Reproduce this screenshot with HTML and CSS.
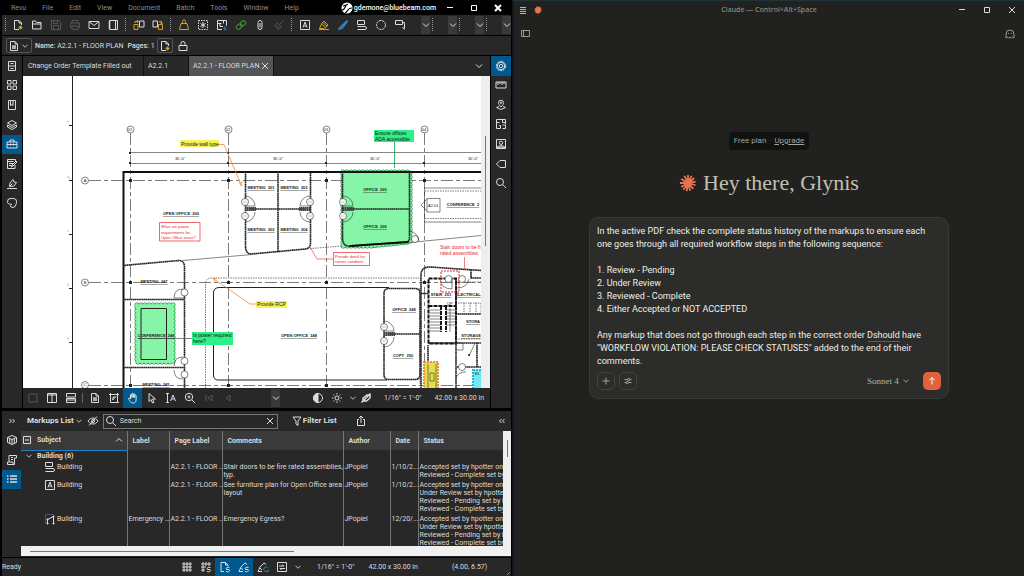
FILE: index.html
```html
<!DOCTYPE html>
<html lang="en">
<head>
    <meta charset="UTF-8">
    <meta name="viewport" content="width=device-width, initial-scale=1.0">
    <title>A2.2.1 - FLOOR PLAN</title>
    <link rel="stylesheet" href="styles.css">
</head>
<body>
    <!-- Icon set, 12 x 12 grid -->
    <svg class="symbols" aria-hidden="true">
        <symbol id="chevron" viewBox="0 0 12 12"><path d="M3 4.5l3 3 3-3"/></symbol>
        <symbol id="chevron-up" viewBox="0 0 12 12"><path d="M3 7.5l3-3 3 3"/></symbol>
        <symbol id="close" viewBox="0 0 12 12"><path d="M3 3l6 6M9 3l-6 6"/></symbol>
        <symbol id="minimize" viewBox="0 0 12 12"><path d="M3 5.5h6"/></symbol>
        <symbol id="maximize" viewBox="0 0 12 12"><path d="M3.5 3.5h5v5h-5z"/></symbol>
        <symbol id="new" viewBox="0 0 12 12"><path d="M7 10.5H2.5v-9H7L9.5 4v2M7 1.5V4h2.5"/><path class="gold" d="M8.5 6.5v4M6.5 8.5h4M7.3 7.3l2.4 2.4M9.7 7.3L7.3 9.7"/></symbol>
        <symbol id="folder" viewBox="0 0 12 12"><path d="M1.5 10V2h3l1 1.5H10V10zM1.5 5H10"/></symbol>
        <symbol id="save" viewBox="0 0 12 12"><path d="M1.5 1.5h7l2 2v7h-9zM3.5 1.5v3h4v-3M3.5 10.5v-4h5v4"/></symbol>
        <symbol id="print" viewBox="0 0 12 12"><path d="M3 4V1.5h6V4M3 8.5H1.5V4h9v4.5H9M3 7h6v3.5H3z"/></symbol>
        <symbol id="mail" viewBox="0 0 12 12"><path d="M1 2.5h10v7H1zM1 2.5l5 4 5-4"/></symbol>
        <symbol id="notebook" viewBox="0 0 12 12"><path d="M2.5 1.5h8v9h-8zM8.5 1.5v9M1.5 3h2M1.5 5h2M1.5 7h2M1.5 9h2"/></symbol>
        <symbol id="undo" viewBox="0 0 12 12"><path d="M6.5 2H11v6H6.500z"/><path class="gold" d="M1 5.5h4v5H1zM2 4V2.5h3M4 1l1.500 1.500L4 4"/></symbol>
        <symbol id="redo" viewBox="0 0 12 12"><path d="M1 2h4.500v6H1z"/><path class="gold" d="M6.500 5.500h4v5h-4zM7 2.500h2.500V5M8 3.500L9.500 5 11 3.500"/></symbol>
        <symbol id="stamp" viewBox="0 0 12 12"><path class="gold" d="M1.500 10.500h9l-1.500-6H3zM4.500 4.500v-2a1.500 1.500 0 0 1 3 0v2"/></symbol>
        <symbol id="snapshot" viewBox="0 0 12 12"><path stroke-dasharray="1.5 1" d="M1.500 1.500h9v9h-9z"/><path d="M6 3v6M3.500 4.500l5 3M8.500 4.500l-5 3"/></symbol>
        <symbol id="compare" viewBox="0 0 12 12"><path d="M6 10.500H1.500v-9h9v5M1.500 4.500h4M4 4.500v3h3M7.500 1.500v3"/><path class="sky" d="M9 7v4M7.500 9.500L9 11l1.500-1.500"/></symbol>
        <symbol id="link" viewBox="0 0 12 12"><g class="green" transform="rotate(-40 6 6)"><rect x="0.5" y="4" width="6" height="4" rx="2"/><rect x="5.5" y="4" width="6" height="4" rx="2"/></g></symbol>
        <symbol id="clip" viewBox="0 0 12 12"><path d="M6 4v4.500M4 4v4.500a2 2 0 0 0 4 0v-5a2 2 0 0 0-4 0"/></symbol>
        <symbol id="brush" viewBox="0 0 12 12"><path d="M10.500 1.500L7 5M4.500 4l3.500 3.500-2 3-4.500-4zM3.500 7.500l1.500-1M5 9l1.500-1.500"/></symbol>
        <symbol id="textbox" viewBox="0 0 12 12"><path d="M1.500 1.500h9v9h-9zM4 8.500l2-5.500 2 5.500M4.700 7h2.600"/></symbol>
        <symbol id="marker" viewBox="0 0 12 12"><path class="gold" d="M6 2l4 4-2 2.500-4.500-3.500zM3.500 5l-2 4.500h4L8 8.500M1 10.500h10M5 3.500L9 7"/></symbol>
        <symbol id="pen" viewBox="0 0 12 12"><path class="sky" stroke-width="1.5" d="M10.500 1.500l-6 5.500-3 3.500 4-1.500 5-7M3 8.500l2 1"/></symbol>
        <symbol id="lines" viewBox="0 0 12 12"><path d="M1.500 1.500h7v4h-7zM1.500 7.500H9a1.500 1.500 0 0 1 0 3H1.500"/></symbol>
        <symbol id="cloud" viewBox="0 0 12 12"><circle cx="6" cy="6" r="4.5" stroke-dasharray="2.5 0.6"/></symbol>
        <symbol id="callout" viewBox="0 0 12 12"><path d="M1.500 1.500h7v4h-7zM8.500 3.500h2v6M8.500 8l2 2.500"/></symbol>
        <symbol id="page" viewBox="0 0 12 12"><path d="M7 10.500H2.500v-9H7L9.500 4v6.500H7M7 1.500V4h2.500M4 6h4M4 8h4M5 5.500V9M7 5.500V9"/></symbol>
        <symbol id="lock" viewBox="0 0 12 12"><path d="M2 5.500h8v5H2zM4 5.500v-2a2 2 0 0 1 4 0v2"/></symbol>
        <symbol id="cabinet" viewBox="0 0 12 12"><path d="M2.500 1.500h7v9h-7zM2.500 6h7M4.500 3.500h3M4.500 8.500h3"/></symbol>
        <symbol id="thumbs" viewBox="0 0 12 12"><path d="M1.500 1.500H5V5H1.500zM7 1.500h3.500V5H7zM1.500 7H5v3.500H1.500zM7 7h3.500v3.500H7z"/></symbol>
        <symbol id="bookmark" viewBox="0 0 12 12"><path d="M2.500 1.500h7v9h-7zM4.500 1.500v5l1.300-1 1.200 1v-5"/></symbol>
        <symbol id="layers" viewBox="0 0 12 12"><path d="M6 1.500L10.500 4 6 6.500 1.500 4zM1.500 6v2L6 10.500 10.500 8V6L6 8.500z"/></symbol>
        <symbol id="toolbox" viewBox="0 0 12 12"><path d="M1 4h10v6H1zM4 4V2h4v2M1 6.500h3M5 6.500h2M8 6.500h3M4.500 5.500v2M7.500 5.500v2"/></symbol>
        <symbol id="props" viewBox="0 0 12 12"><path d="M9 7v3.500H1.500v-9h8V3M1.500 3.500h6M3 5.500h4M3 7.500h3M5.500 9L6 7l4-4 1 1-4 4z"/></symbol>
        <symbol id="sign" viewBox="0 0 12 12"><path d="M1 10.500h10M3.500 8.500L4 5l3-3.500 1 2.500 2.500.5L8 8zM3.500 8.500l3-3"/></symbol>
        <symbol id="shape" viewBox="0 0 12 12"><path d="M2 2.500c2.500-1.500 6-1.500 8 0 1 2.500.5 5-1.500 7.500l-2.500.5-2-1.500c1-.5 1.500-1 1.500-2C4 7.500 2 7 1.500 5.500z"/></symbol>
        <symbol id="gear" viewBox="0 0 12 12"><circle cx="6" cy="6" r="4.7" stroke-dasharray="2.2 0.7"/><circle cx="6" cy="6" r="3.7"/><circle cx="6" cy="6" r="1.7"/></symbol>
        <symbol id="ruler" viewBox="0 0 12 12"><path d="M1 3h10v6H1zM3 3v3M5 3v2M7 3v3M9 3v2"/></symbol>
        <symbol id="place" viewBox="0 0 12 12"><path d="M6 8C4 5.500 3.500 5 3.500 3.700a2.500 2.500 0 0 1 5 0C8.500 5 8 5.500 6 8zM4 7.500l-2.500 1 4.500 2 4.500-2-2.500-1"/><circle cx="6" cy="3.7" r="0.8"/></symbol>
        <symbol id="spaces" viewBox="0 0 12 12"><path d="M1.500 10.500v-9h9V6M1.500 4.500h3M7.500 1.500v3h3M1.500 10.500h4v-3H4M7.500 7h3v3.500h-3"/></symbol>
        <symbol id="person" viewBox="0 0 12 12"><path d="M1.500 1.500h9v9h-9zM2 10c1-3 7-3 8 0zM1.500 9h9"/><circle cx="6" cy="4.8" r="1.7"/></symbol>
        <symbol id="flag" viewBox="0 0 12 12"><path d="M10.500 2.500v7H5L1.500 6 5 2.500z"/></symbol>
        <symbol id="search" viewBox="0 0 12 12"><circle cx="5" cy="5" r="3.5"/><path d="M7.500 7.500L11 11"/></symbol>
        <symbol id="square" viewBox="0 0 12 12"><path d="M2 2h8v8H2z"/></symbol>
        <symbol id="split-v" viewBox="0 0 12 12"><path d="M1.500 1.500h9v9h-9zM6 1.500v9M1.500 3h9"/></symbol>
        <symbol id="split-h" viewBox="0 0 12 12"><path d="M1.500 1.500h9V5h-9zM1.500 6.500h9v4h-9zM1.500 8h9"/></symbol>
        <symbol id="crop" viewBox="0 0 12 12"><path d="M1 2.500h10M9.500 1v10M2.500 1v9.500H11M5 8V5h2.500M4.500 8L8 4.500"/></symbol>
        <symbol id="hand" viewBox="0 0 12 12"><path d="M3.500 7V3a.7.7 0 0 1 1.400 0v2.500V2a.7.7 0 0 1 1.400 0v3.500v-3a.7.7 0 0 1 1.400 0v3V3.700a.7.7 0 0 1 1.400 0V8c0 2-1.200 3-3 3s-2.600-1-3.300-2.200L1.200 6.500c.7-.8 1.400-.6 2.300.5z"/></symbol>
        <symbol id="cursor" viewBox="0 0 12 12"><path d="M3 1.500v8l2-2 1.500 3.500 1.500-.7L6.500 7h3z"/></symbol>
        <symbol id="select-text" viewBox="0 0 12 12"><path d="M1 1.500h3M2.500 1.500v9M1 10.500h3M5.500 9L8 3l2.500 6M6.500 7h3"/></symbol>
        <symbol id="zoom-in" viewBox="0 0 12 12"><circle cx="5" cy="5" r="3.7"/><path d="M7.700 7.700L11 11M5 3.500v3M3.500 5h3"/></symbol>
        <symbol id="first" viewBox="0 0 12 12"><path d="M3 3v6M9 3L5 6l4 3z"/></symbol>
        <symbol id="prev" viewBox="0 0 12 12"><path d="M8 3L4 6l4 3z"/></symbol>
        <symbol id="contrast" viewBox="0 0 12 12"><circle cx="6" cy="6" r="4.5"/><path class="solid" d="M6 1.500a4.500 4.500 0 0 0 0 9z"/></symbol>
        <symbol id="sun" viewBox="0 0 12 12"><circle cx="6" cy="6" r="2"/><path d="M6 1v1.500M6 9.500V11M1 6h1.500M9.500 6H11M2.500 2.500l1 1M8.500 8.500l1 1M9.500 2.500l-1 1M3.500 8.500l-1 1"/></symbol>
        <symbol id="line-off" viewBox="0 0 12 12"><path stroke-width="1.5" d="M1.500 10.500l9-9M3 9V6l4-3h3v3L6.500 9z"/></symbol>
        <symbol id="eye-off" viewBox="0 0 12 12"><path d="M1 6c2.500-4 7.500-4 10 0-2.500 4-7.500 4-10 0zM2 10.500l8-9"/><circle cx="6" cy="6" r="1.5"/></symbol>
        <symbol id="filter" viewBox="0 0 12 12"><path d="M2 2h8L7 6v4.500L5 9V6z"/></symbol>
        <symbol id="share" viewBox="0 0 12 12"><path d="M4 4.500H2.500v6h7v-6H8M6 8V1.500M4 3l2-2 2 2"/></symbol>
        <symbol id="expand" viewBox="0 0 12 12"><path d="M3.500 4l2 2-2 2M6.500 4l2 2-2 2"/></symbol>
        <symbol id="collapse" viewBox="0 0 12 12"><path d="M5.500 4l-2 2 2 2M8.500 4l-2 2 2 2"/></symbol>
        <symbol id="cube" viewBox="0 0 12 12"><path d="M1.500 3.500L6 1.500l4.500 2v5L6 10.500l-4.500-2zM1.500 3.500l4.500 2 4.500-2M6 5.500v5M3.700 5v4M8.300 5v4"/></symbol>
        <symbol id="script" viewBox="0 0 12 12"><path d="M3 8V1.500h7.500V4h-2v6.500h-7V8H7v2.500M5 3.500h2M5 5.500h2"/></symbol>
        <symbol id="list" viewBox="0 0 12 12"><path stroke-width="1.5" d="M1 3h1.500M4 3h7M1 6h1.500M4 6h7M1 9h1.500M4 9h7"/></symbol>
        <symbol id="minus-box" viewBox="0 0 12 12"><path d="M2.500 2.500h7v7h-7zM4 6h4"/></symbol>
        <symbol id="polygon" viewBox="0 0 12 12"><path class="violet" stroke-dasharray="1 1" d="M1.500 10.500v-9h9"/><path d="M3.500 10.500v-4l6-3v7"/><path class="solid" d="M3 6h1v1H3zM9 3h1v1H9zM9 10h1v1H9zM3 10h1v1H3z"/></symbol>
        <symbol id="grid" viewBox="0 0 12 12"><path d="M1 3h10M1 6h10M1 9h10M3 1v10M6 1v10M9 1v10"/></symbol>
        <symbol id="grid-snap" viewBox="0 0 12 12"><path d="M1 3h10M1 6h5M1 9h4M3 1v10M6 1v4M9 1v4M7 10.500c3.500 1 4-1 3-2H7.500c-1-1 0-3 3-2"/></symbol>
        <symbol id="page-snap" viewBox="0 0 12 12"><path d="M5 10.500H2v-9h4.500L9 4v1M6.500 1.500V4H9M7 10.500c3.500 1 4-1 3-2H7.500c-1-1 0-3 3-2"/></symbol>
        <symbol id="mark-snap" viewBox="0 0 12 12"><path d="M1 10.500L3 6l4-4 2 1.500M1 10.500h4M7 10.500c3.500 1 4-1 3-2H7.500c-1-1 0-3 3-2M3 7l2 2"/></symbol>
        <symbol id="reuse" viewBox="0 0 12 12"><path d="M1 10.500L3 6l4-4 2 1.500M1 10.500h4M3 7l2 2"/><path class="sky" d="M10.500 6.500a2.300 2.300 0 1 0 .5 3M9 10.500h2v-2"/></symbol>
        <symbol id="sync" viewBox="0 0 12 12"><path d="M1.500 1.500h9v9h-9zM3 5h5M6.500 3.500L8 5M9 7.500H4M5.500 9L4 7.500"/></symbol>
        <symbol id="menu" viewBox="0 0 12 12"><path d="M3 3.500h6M3 5.500h6M3 7.500h6M3 9.500h6"/></symbol>
        <symbol id="sidebar" viewBox="0 0 12 12"><path d="M1.500 2.500h8v6h-8zM3.500 2.500v6"/></symbol>
        <symbol id="ghost" viewBox="0 0 12 12"><path d="M2 10V6a4 4 0 0 1 8 0v4L8.700 9l-1.400 1L6 9l-1.400 1-1.300-1zM4.500 5v1M7.500 5v1"/></symbol>
        <symbol id="plus" viewBox="0 0 12 12"><path d="M6 2.500v7M2.500 6h7"/></symbol>
        <symbol id="tune" viewBox="0 0 12 12"><path d="M2.500 4.500h3M8 4.500h1.500M2.500 7.500H4M6.500 7.500h3"/><circle cx="6.700" cy="4.500" r="1.200"/><circle cx="5.200" cy="7.500" r="1.200"/></symbol>
        <symbol id="arrow-up" viewBox="0 0 12 12"><path d="M6 9.500v-7M3.200 5.300L6 2.500l2.800 2.800"/></symbol>
        <symbol id="burst" viewBox="0 0 20 20"><path d="M10 10V1M10 10l4-8M10 10l7-5.500M10 10l8.500-1.500M10 10l8.500 2.500M10 10l6 6.500M10 10l2.500 8.500M10 10l-1.500 9M10 10l-5 7.500M10 10l-7.500 4.500M10 10H1M10 10L2.500 5.500M10 10L6 2"/></symbol>
    </svg>

    <div class="desktop">
        <!-- Drawing editor window -->
        <section class="editor">
            <header class="menubar">
                <nav class="menus">
                    <button>Revu</button>
                    <button>File</button>
                    <button>Edit</button>
                    <button>View</button>
                    <button>Document</button>
                    <button>Batch</button>
                    <button>Tools</button>
                    <button>Window</button>
                    <button>Help</button>
                </nav>
                <div class="account">
                    <svg class="logo" viewBox="0 0 12 12"><circle cx="6" cy="6" r="5.5" fill="#fff"/><path d="M1 8c4 0 2-5 6-6M4 11c3-1 2-5 7-5M2 4l3-1" stroke="#000" stroke-width="1.2"/></svg>
                    gdemone@bluebeam.com
                </div>
                <div class="window-buttons">
                    <button aria-label="Minimize"><svg class="icon"><use href="#minimize"/></svg></button>
                    <button aria-label="Maximize"><svg class="icon"><use href="#maximize"/></svg></button>
                    <button aria-label="Close"><svg class="icon strong"><use href="#close"/></svg></button>
                </div>
            </header>

            <div class="toolbar">
                <span class="grip"></span>
                <button aria-label="New"><svg class="icon"><use href="#new"/></svg></button>
                <button aria-label="Open"><svg class="icon"><use href="#folder"/></svg></button>
                <button aria-label="Save" disabled><svg class="icon"><use href="#save"/></svg></button>
                <button aria-label="Print" disabled><svg class="icon"><use href="#print"/></svg></button>
                <button aria-label="Email"><svg class="icon"><use href="#mail"/></svg></button>
                <button aria-label="Studio"><svg class="icon"><use href="#notebook"/></svg></button>
                <span class="grip"></span>
                <button aria-label="Undo"><svg class="icon"><use href="#undo"/></svg></button>
                <button aria-label="Redo"><svg class="icon"><use href="#redo"/></svg></button>
                <span class="grip"></span>
                <button aria-label="Stamp"><svg class="icon"><use href="#stamp"/></svg></button>
                <button aria-label="Snapshot"><svg class="icon"><use href="#snapshot"/></svg></button>
                <button aria-label="Compare"><svg class="icon"><use href="#compare"/></svg></button>
                <button aria-label="Hyperlink"><svg class="icon"><use href="#link"/></svg></button>
                <button aria-label="Attach"><svg class="icon"><use href="#clip"/></svg></button>
                <button aria-label="Format painter" disabled><svg class="icon"><use href="#brush"/></svg></button>
                <span class="grip"></span>
                <button aria-label="Text box"><svg class="icon"><use href="#textbox"/></svg></button>
                <button aria-label="Highlight"><svg class="icon"><use href="#marker"/></svg></button>
                <button aria-label="Pen"><svg class="icon"><use href="#pen"/></svg></button>
                <button aria-label="Dimension"><svg class="icon"><use href="#lines"/></svg></button>
                <button aria-label="Cloud"><svg class="icon"><use href="#cloud"/></svg></button>
                <button aria-label="Callout"><svg class="icon"><use href="#callout"/></svg></button>
                <div class="overflow">
                    <button class="more" aria-label="More markups"><svg class="icon"><use href="#chevron"/></svg></button><span class="grip"></span>
                    <button class="more" aria-label="More shapes"><svg class="icon"><use href="#chevron"/></svg></button><span class="grip"></span>
                    <button class="more" aria-label="More measures"><svg class="icon"><use href="#chevron"/></svg></button><span class="grip"></span>
                    <button class="more" aria-label="More tools"><svg class="icon"><use href="#chevron"/></svg></button>
                </div>
            </div>

            <div class="properties">
                <button class="boxed" aria-label="File properties"><svg class="icon"><use href="#page"/></svg><svg class="icon small"><use href="#chevron"/></svg></button>
                <span class="name"><b>Name:</b> A2.2.1 - FLOOR PLAN</span>
                <span class="pages"><b>Pages:</b> 1</span>
                <button class="boxed" aria-label="Add page"><svg class="icon"><use href="#new"/></svg></button>
                <button aria-label="Security"><svg class="icon"><use href="#lock"/></svg></button>
            </div>

            <div class="workspace">
                <nav class="rail">
                    <button aria-label="File access"><svg class="icon"><use href="#cabinet"/></svg></button>
                    <button aria-label="Thumbnails"><svg class="icon"><use href="#thumbs"/></svg></button>
                    <button aria-label="Bookmarks"><svg class="icon"><use href="#bookmark"/></svg></button>
                    <button aria-label="Layers"><svg class="icon"><use href="#layers"/></svg></button>
                    <button class="active" aria-label="Tool chest"><svg class="icon"><use href="#toolbox"/></svg></button>
                    <button aria-label="Forms"><svg class="icon"><use href="#props"/></svg></button>
                    <button aria-label="Signatures"><svg class="icon"><use href="#sign"/></svg></button>
                    <button aria-label="Studio"><svg class="icon"><use href="#shape"/></svg></button>
                </nav>

                <div class="document">
                    <div class="tabs">
                        <button class="tab wide">Change Order Template Filled out</button>
                        <button class="tab short">A2.2.1</button>
                        <button class="tab current">A2.2.1 - FLOOR PLAN <svg class="icon"><use href="#close"/></svg></button>
                        <button class="tab-list" aria-label="All tabs"><svg class="icon"><use href="#chevron"/></svg></button>
                    </div>

                    <div class="sheet">
                        <svg class="plan" viewBox="23 76 458 312" preserveAspectRatio="xMinYMin slice">
                            <defs>
                                <!-- pair of door tags with their swings -->
                                <g id="door"><path d="M0 -10a10 10 0 0 1 10 10h-10M0 16a10 10 0 0 0 10 -10" class="thin"/><circle cy="-4" cx="0" r="3.5" class="tag"/><circle cy="10" cx="0" r="3.5" class="tag"/><path d="M-2 -4h4M-2 10h4" class="faint"/><path d="M0 3h11" class="wall thick"/></g>
                                <path id="office-cloud" d="M343 172h67v70l-40 4h-27z"/>
                                <path id="conf-cloud" d="M137 305h36v57h-36z"/>
                            </defs>

                            <!-- sheet frame and grid -->
                            <path class="line" d="M72.5 76v312M69 125.5h3M69 180.5h3M69 234.5h3M69 288.5h3M69 342.5h3"/>
                            <path class="faint" d="M67 121l2 1M67 177h2v2M67 230l2 2M68 283v3M68 337v3"/>
                            <path class="thin" d="M130 152.5h351M130 163.5h351"/>
                            <path class="axis" d="M130.5 133v255M228.5 133v255M326.5 133v255M424.5 133v255M89 180.5h392M89 282.5h392M89 385.5h392"/>
                            <path class="node" d="M129 179h3v3h-3zM227 179h3v3h-3zM325 179h3v3h-3zM423 179h3v3h-3zM129 281h3v3h-3zM227 281h3v3h-3zM325 281h3v3h-3zM423 281h3v3h-3zM129 384h3v3h-3zM227 384h3v3h-3zM325 384h3v3h-3zM129 152h2v2h-2zM227 152h2v2h-2zM129 162h2v2h-2zM227 162h2v2h-2zM325 162h2v2h-2zM423 162h2v2h-2z"/>
                            <g class="tag">
                                <circle cx="130.5" cy="129.5" r="3.5"/><circle cx="228.5" cy="129.5" r="3.5"/><circle cx="326.5" cy="129.5" r="3.5"/><circle cx="424.5" cy="129.5" r="3.5"/>
                                <circle cx="85" cy="180.5" r="3.5"/><circle cx="85" cy="282.5" r="3.5"/><circle cx="85" cy="385" r="3.5"/>
                            </g>
                            <g class="tiny">
                                <text x="130" y="131">01</text><text x="228" y="131">02</text><text x="326" y="131">03</text><text x="424" y="131">04</text>
                                <text x="85" y="182">A</text><text x="85" y="284">B</text><text x="85" y="386">C</text>
                                <text x="180" y="160">30'-0"</text><text x="278" y="160">30'-0"</text><text x="375" y="160">30'-0"</text><text x="473" y="160">30'-0"</text>
                            </g>

                            <!-- highlights sit under the walls -->
                            <use href="#office-cloud" class="puff-edge"/><use href="#office-cloud" class="puff"/>
                            <use href="#conf-cloud" class="puff-edge"/><use href="#conf-cloud" class="puff"/>

                            <!-- walls -->
                            <path class="outer" d="M123.5 388V172H481"/>
                            <path class="wall" d="M245.5 172v74q0 8 6 8l54-5q5-1 5-6V172M278 172v80M250 209h56"/>
                            <path class="wall" d="M342.5 172v67q1 8 8 7l55-4q4 0 4-4v-66M348 209h61"/>
                            <path class="wall heavy" d="M350 246l59-4"/>
                            <path class="wall" d="M123 265.5l56-5q5 0 5.5 6V388M123 299.5h61M123 367.5h61"/>
                            <path class="thin" d="M183 260.5l69-6M410 242.5l71-7"/>
                            <path class="dotted" d="M305 249l37-3"/>
                            <path class="dotted" d="M205.5 388V284q0-6 6-6H421"/>
                            <path class="line" d="M219 287.5h170M213.5 293v82q0 5 5 5H387M213.5 293q0-5.5 6-5.5"/>
                            <path class="wall" d="M389 288.5h26q5 0 5 5v81q0 5-5 5h-26q-5 0-5-5v-81q0-5 5-5zM389 334h31"/>
                            <path class="wall" d="M421 388V275q0-8 9-8l51 3.5M421 293.5h7"/>
                            <path class="thin" d="M424.5 222v-34H481M424.5 222H481"/>
                            <path class="line" d="M141 308.5h25.5v51H141z"/>
                            <path class="dotted" d="M425 191h56M425 218.5h56M420 288v96"/>
                            <path class="thin" d="M427 198.5h13V212h-13zM427 199l-6 6 6 6M138 338.5h54"/>
                            <path class="stair" d="M428.5 278.5H456v65h-27.5zM428.5 306H456M441 306v26M446 306v26"/>
                            <path class="thin" d="M430 310h11M430 313h11M430 316h11M430 319h11M430 322h11M430 325h11M430 328h11M430 331h11M446 310h9M446 313h9M446 316h9M446 319h9M446 322h9M446 325h9M450 308v24"/>
                            <path class="wall" d="M456 278v110M428 343h53M456 314h25M428 345v43M471 270v8h10M477 343v24M457 367h24"/>
                            <path class="dotted" d="M458 303h23v11M464 303v11M470 303v11M476 303v11M456 339h25M457 282h24"/>
                            <path class="thin" d="M475 343l-6 13M457 343h6v7h-6M456 378a10 10 0 0 1 10-6"/>

                            <!-- doors -->
                            <use href="#door" x="245" y="206"/><use href="#door" x="343" y="206"/><use href="#door" x="384" y="331"/>
                            <g transform="matrix(-1 0 0 1 310 206)"><use href="#door"/></g>
                            <g class="tag"><circle cx="184.5" cy="292.5" r="3.5"/><circle cx="184.5" cy="361" r="3.5"/><circle cx="184.5" cy="374.5" r="3.5"/><circle cx="448.5" cy="279" r="3.5"/><circle cx="462" cy="279" r="3.5"/><circle cx="462" cy="367" r="3.5"/><circle cx="415" cy="239" r="3.5"/></g>
                            <path class="thin" d="M174 298q0-9 9-9M174 298h10M174 366q0-9 9-9M174 370q0 9 9 9M440 279q1 10 12 10v-10M469 279q-2 9-12 9M410 231q8 2 9 10"/>
                            <circle class="node" cx="469" cy="355" r="1"/>

                            <!-- rooms -->
                            <g class="room">
                                <text x="181" y="215">OPEN OFFICE&#160; 200</text>
                                <text x="261" y="189">MEETING&#160; 201</text><text x="294" y="189">MEETING&#160; 203</text>
                                <text x="261" y="231">MEETING&#160; 202</text><text x="294" y="231">MEETING&#160; 204</text>
                                <text x="375" y="191">OFFICE&#160; 205</text><text x="375" y="228">OFFICE&#160; 206</text>
                                <text x="463" y="206">CONFERENCE&#160; 2</text>
                                <text x="154" y="283">MEETING&#160; 247</text><text x="156" y="337">CONFERENCE&#160; 246</text>
                                <text x="156" y="386">MEETING&#160; 245</text><text x="299" y="337">OPEN OFFICE&#160; 248</text>
                                <text x="404" y="311">OFFICE&#160; 248</text><text x="403" y="357">COPY&#160; 250</text>
                                <text x="441" y="296">STAIR&#160; 251</text><text x="468" y="296">ELECTRICAL</text>
                                <text x="473" y="323">STORA</text><text x="471" y="337">STORAGE</text>
                            </g>
                            <text class="mark" x="428" y="207">A2.01</text>
                            <text class="mark" x="447" y="305">UP</text>

                            <!-- markups -->
                            <path class="note-green" d="M374 130h40v12h-40zM192 332h41v13h-41z"/>
                            <path class="green-line" d="M394.5 142v26"/>
                            <g class="note"><text x="375" y="135">Ensure offices</text><text x="375" y="141">ADA accessible</text><text x="193" y="337">Is power required</text><text x="193" y="343">here?</text></g>
                            <path class="note-yellow" d="M180 140h39v7h-39zM256 301h31v7h-31z"/>
                            <g class="note"><text x="181" y="146">Provide wall type</text><text x="257" y="306">Provide RCP</text></g>
                            <path class="orange-line" d="M219 144.5h5l17 40M239 182l2.500 4 .5-5M256 304h-6l-36-25M217 279l-4-1 2 4"/>
                            <path class="red-box" d="M159.5 222.5H200V241h-40.500zM333.5 252.5h36v13h-36z"/>
                            <path class="red-line" d="M333 259h-16l-7-12M464.5 257v12"/>
                            <g class="red small-note"><text x="161" y="228">What are power</text><text x="161" y="234">requirements for</text><text x="161" y="239">Open Office areas?</text><text x="335" y="258">Provide detail for</text><text x="335" y="263">corner condition</text></g>
                            <g class="red note"><text x="440" y="249">Stair doors to be fi</text><text x="440" y="255">rated assemblies,</text></g>
                            <path class="red-cloud" d="M441 271h18v21h-18z"/>
                            <path class="yellow-cloud" d="M424 362h14v30h-14z"/>
                            <path class="thin" d="M428 364v24M436 364v24M430 373h4v8h-4z"/>
                            <path class="cyan-cloud" d="M473 370h12v20h-12z"/>
                            <text class="mark" x="475" y="375">EL</text>
                        </svg>
                        <div class="scroll-y"><span></span></div>
                    </div>

                    <div class="navbar">
                        <button aria-label="Single" disabled><svg class="icon"><use href="#square"/></svg></button>
                        <button aria-label="Split vertical"><svg class="icon"><use href="#split-v"/></svg></button>
                        <button aria-label="Split horizontal"><svg class="icon"><use href="#split-h"/></svg></button>
                        <span class="divider"></span>
                        <button aria-label="Page setup"><svg class="icon"><use href="#page"/></svg></button>
                        <button aria-label="Crop"><svg class="icon"><use href="#crop"/></svg></button>
                        <button class="active" aria-label="Pan"><svg class="icon"><use href="#hand"/></svg></button>
                        <button aria-label="Select"><svg class="icon"><use href="#cursor"/></svg></button>
                        <button aria-label="Select text"><svg class="icon"><use href="#select-text"/></svg></button>
                        <button aria-label="Zoom"><svg class="icon"><use href="#zoom-in"/></svg></button>
                        <button aria-label="First page" disabled><svg class="icon"><use href="#first"/></svg></button>
                        <button aria-label="Previous page" disabled><svg class="icon"><use href="#prev"/></svg></button>
                        <div class="nav-end">
                            <button class="more" aria-label="More"><svg class="icon"><use href="#chevron"/></svg></button>
                            <button class="dim-first" aria-label="Dimmer"><svg class="icon"><use href="#contrast"/></svg></button>
                            <button aria-label="Brightness"><svg class="icon"><use href="#sun"/></svg></button>
                            <button class="slim" aria-label="Brightness options"><svg class="icon small"><use href="#chevron"/></svg></button>
                            <button class="slim" aria-label="Line weights"><svg class="icon"><use href="#line-off"/></svg></button>
                            <span class="scale">1/16" = 1'-0"</span>
                            <span>42.00 x 30.00 in</span>
                        </div>
                    </div>
                </div>

                <nav class="rail right">
                    <button class="active" aria-label="Properties"><svg class="icon"><use href="#gear"/></svg></button>
                    <button aria-label="Measurements"><svg class="icon"><use href="#ruler"/></svg></button>
                    <button aria-label="Places"><svg class="icon"><use href="#place"/></svg></button>
                    <button aria-label="Spaces"><svg class="icon"><use href="#spaces"/></svg></button>
                    <button aria-label="Models"><svg class="icon"><use href="#person"/></svg></button>
                    <button aria-label="Flags"><svg class="icon"><use href="#flag"/></svg></button>
                    <button aria-label="Search panel"><svg class="icon"><use href="#search"/></svg></button>
                </nav>
            </div>

            <div class="markups">
                <nav class="rail">
                    <button aria-label="Expand"><svg class="icon"><use href="#expand"/></svg></button>
                    <button aria-label="3D model"><svg class="icon"><use href="#cube"/></svg></button>
                    <button aria-label="Scripts"><svg class="icon"><use href="#script"/></svg></button>
                    <button class="active" aria-label="Markups list"><svg class="icon"><use href="#list"/></svg></button>
                </nav>
                <div class="panel">
                    <div class="panel-bar">
                        <button class="title">Markups List <svg class="icon small"><use href="#chevron"/></svg></button>
                        <button class="hide" aria-label="Hide markups"><svg class="icon"><use href="#eye-off"/></svg></button>
                        <label class="search"><svg class="icon"><use href="#search"/></svg><input type="text" placeholder="Search" aria-label="Search markups"><svg class="icon"><use href="#close"/></svg></label>
                        <button class="title filter"><svg class="icon"><use href="#filter"/></svg>Filter List</button>
                        <button class="export" aria-label="Export"><svg class="icon"><use href="#share"/></svg></button>
                        <button class="collapse" aria-label="Collapse"><svg class="icon"><use href="#collapse"/></svg></button>
                    </div>
                    <div class="table-area">
                        <div class="table-clip">
                            <table>
                                <colgroup><col class="c-subject"><col class="c-label"><col class="c-page"><col class="c-comments"><col class="c-author"><col class="c-date"><col></colgroup>
                                <thead>
                                    <tr>
                                        <th class="sorted"><div class="subject-head"><svg class="icon"><use href="#minus-box"/></svg>Subject<svg class="icon up"><use href="#chevron-up"/></svg></div></th>
                                        <th>Label</th><th>Page Label</th><th>Comments</th><th>Author</th><th>Date</th><th>Status</th>
                                    </tr>
                                </thead>
                                <tbody>
                                    <tr class="group"><td><div class="group-name"><svg class="icon small"><use href="#chevron"/></svg>Building (6)</div></td><td></td><td></td><td></td><td></td><td></td><td></td></tr>
                                    <tr>
                                        <td><div class="subject"><svg class="icon"><use href="#lines"/></svg>Building</div></td><td></td><td>A2.2.1 - FLOOR …</td>
                                        <td>Stair doors to be fire rated assemblies,<br>typ.</td><td>JPopiel</td><td>1/10/2...</td>
                                        <td>Accepted set by hpotter on 8<br>Reviewed - Complete set by h</td>
                                    </tr>
                                    <tr>
                                        <td><div class="subject"><svg class="icon"><use href="#textbox"/></svg>Building</div></td><td></td><td>A2.2.1 - FLOOR …</td>
                                        <td>See furniture plan for Open Office area<br>layout</td><td>JPopiel</td><td>1/10/2...</td>
                                        <td>Accepted set by hpotter on 8<br>Under Review set by hpotter<br>Reviewed - Pending set by hp<br>Reviewed - Complete set by h</td>
                                    </tr>
                                    <tr>
                                        <td><div class="subject"><svg class="icon"><use href="#polygon"/></svg>Building</div></td><td>Emergency …</td><td>A2.2.1 - FLOOR …</td>
                                        <td>Emergency Egress?</td><td>JPopiel</td><td>12/20/...</td>
                                        <td>Accepted set by hpotter on 8<br>Under Review set by hpotter<br>Reviewed - Pending set by hp<br>Reviewed - Complete set by h</td>
                                    </tr>
                                </tbody>
                            </table>
                        </div>
                        <div class="scroll-y"><span></span></div>
                    </div>
                    <div class="scroll-x"><span></span></div>
                </div>
            </div>

            <footer class="statusbar">
                <span class="ready">Ready</span>
                <button aria-label="Grid"><svg class="icon"><use href="#grid"/></svg></button>
                <button aria-label="Snap to grid"><svg class="icon"><use href="#grid-snap"/></svg></button>
                <button class="active" aria-label="Snap to content"><svg class="icon"><use href="#page-snap"/></svg></button>
                <button class="active" aria-label="Snap to markup"><svg class="icon"><use href="#mark-snap"/></svg></button>
                <button aria-label="Reuse"><svg class="icon"><use href="#reuse"/></svg></button>
                <button aria-label="Sync"><svg class="icon"><use href="#sync"/></svg></button>
                <button class="slim" aria-label="Sync options"><svg class="icon small"><use href="#chevron"/></svg></button>
                <span class="scale">1/16" = 1'-0"</span>
                <span class="size">42.00 x 30.00 in</span>
                <span class="coords">(4.00, 6.57)</span>
                <span class="resize"></span>
            </footer>
        </section>

        <!-- Chat window -->
        <section class="chat">
            <header class="chat-title">
                <button aria-label="Menu"><svg class="icon"><use href="#menu"/></svg></button>
                <svg class="burst tiny-burst"><use href="#burst"/></svg>
                <span class="caption">Claude — Control+Alt+Space</span>
                <div class="chat-buttons">
                    <button aria-label="Minimize chat"><svg class="icon"><use href="#minimize"/></svg></button>
                    <button aria-label="Maximize chat"><svg class="icon"><use href="#maximize"/></svg></button>
                    <button aria-label="Close chat"><svg class="icon"><use href="#close"/></svg></button>
                </div>
            </header>
            <div class="chat-bar">
                <button aria-label="Sidebar"><svg class="icon"><use href="#sidebar"/></svg></button>
                <button aria-label="Incognito"><svg class="icon"><use href="#ghost"/></svg></button>
            </div>
            <main class="chat-main">
                <p class="plan-pill">Free plan <span>·</span> <a href="#upgrade">Upgrade</a></p>
                <h1><svg class="burst"><use href="#burst"/></svg>Hey there, Glynis</h1>
                <form class="composer">
                    <div class="prompt">
                        <textarea aria-label="Message" rows="11" spellcheck="false">In the active PDF check the complete status history of the markups to ensure each one goes through all required workflow steps in the following sequence:

1. Review - Pending
2. Under Review
3. Reviewed - Complete
4. Either Accepted or NOT ACCEPTED

Any markup that does not go through each step in the correct order Dshould have "WORKFLOW VIOLATION: PLEASE CHECK STATUSES" added to the end of their comments.</textarea>
                        <svg class="squiggle" viewBox="0 0 34 3"><path d="M0 2l1-1 1 1 1-1 1 1 1-1 1 1 1-1 1 1 1-1 1 1 1-1 1 1 1-1 1 1 1-1 1 1 1-1 1 1 1-1 1 1 1-1 1 1 1-1 1 1 1-1 1 1 1-1 1 1 1-1 1 1 1-1 1 1"/></svg>
                    </div>
                    <div class="composer-bar">
                        <button type="button" class="ghost-button" aria-label="Add"><svg class="icon"><use href="#plus"/></svg></button>
                        <button type="button" class="ghost-button" aria-label="Tools"><svg class="icon"><use href="#tune"/></svg></button>
                        <label class="model"><select aria-label="Model"><option>Sonnet 4</option></select><svg class="icon small"><use href="#chevron"/></svg></label>
                        <button type="button" class="send" aria-label="Send"><svg class="icon"><use href="#arrow-up"/></svg></button>
                    </div>
                </form>
            </main>
        </section>
    </div>
</body>
</html>
```
FILE: styles.css
```css
* {
    box-sizing: border-box;
}
body {
    margin: 0;
    background: #000;
    color: #dcdcdc;
    font-family: Roboto, sans-serif;
    font-size: 7px;
    line-height: 8px;
}
button {
    display: flex;
    align-items: center;
    justify-content: center;
    padding: 0;
    border: none;
    background: none;
    color: inherit;
    font: inherit;
    white-space: nowrap;
    cursor: pointer;
}
button:disabled {
    color: #555;
}
.symbols {
    display: none;
}
.icon {
    flex: none;
    width: 12px;
    height: 12px;
    fill: none;
    stroke: currentColor;
    stroke-width: 1;
}
.icon.small {
    width: 10px;
    height: 10px;
}
.icon.strong {
    stroke-width: 2;
}
.gold { stroke: #c9a227; }
.sky { stroke: #2b86c5; }
.green { stroke: #3f9a2f; }
.violet { stroke: #8f6bd0; }
.solid { fill: currentColor; }

.desktop {
    display: grid;
    grid-template-columns: 1fr 1fr;
    height: 100vh;
    min-height: 460px;
}

/* Editor window */
.editor {
    display: flex;
    flex-direction: column;
    min-width: 0;
    overflow: hidden;
    padding: 0 1px 0 2px;
    background: #000;
}
.menubar {
    display: flex;
    align-items: center;
    height: 15px;
    padding-left: 9px;
    color: #8c8c8c;
}
.menus {
    display: flex;
    gap: 16px;
    padding-top: 1px;
}
.account {
    display: flex;
    align-items: center;
    gap: 1px;
    margin-left: auto;
    color: #fff;
    font-weight: 500;
}
.logo {
    width: 12px;
    height: 12px;
    fill: none;
}
.window-buttons {
    display: flex;
    gap: 12px;
    padding: 0 7px 0 8px;
    color: #fff;
}
.toolbar {
    display: flex;
    align-items: center;
    height: 21px;
    padding-left: 2px;
    border-bottom: 1px solid #000;
    background: #282828;
}
.toolbar button {
    width: 19px;
    height: 20px;
}
.grip {
    width: 1px;
    height: 14px;
    margin: 0 3px;
    background: repeating-linear-gradient(#999 0 1px, transparent 1px 2px);
}
.toolbar .grip:first-child {
    margin: 0 2px 0 1px;
}
.overflow {
    display: flex;
    align-items: center;
    margin-left: auto;
}
.overflow .grip {
    margin: 0 15px 0 2px;
}
.toolbar .more,
.navbar .more {
    width: 9px;
    height: 18px;
    background: #3a3a3a;
}
.properties {
    display: flex;
    align-items: center;
    height: 20px;
    padding-left: 4px;
    border-bottom: 1px solid #000;
    background: #282828;
}
.boxed {
    height: 15px;
    padding: 0 1px;
    border: 1px solid #555;
    border-radius: 2px;
}
.name {
    margin-left: 3px;
}
.pages {
    margin: 0 2px 0 4px;
}
.properties b {
    font-weight: 500;
}
.properties button:last-child {
    margin-left: 4px;
}
.workspace {
    display: flex;
    flex: 1;
    min-height: 0;
    margin-bottom: 3px;
    background: #282828;
}
.rail {
    display: grid;
    grid-auto-rows: 1fr;
    flex: none;
    width: 20px;
    height: 157px;
}
.rail.right {
    height: 137px;
}
.active {
    background: #00588c;
}
.document {
    display: flex;
    flex-direction: column;
    flex: 1;
    min-width: 0;
    border: solid #000;
    border-width: 0 1px;
}
.tabs {
    display: flex;
    height: 20px;
    background: #282828;
}
.tab {
    justify-content: flex-start;
    padding-left: 5px;
    border-right: 1px solid #111;
}
.tab.wide {
    width: 121px;
}
.tab.short {
    width: 45px;
    padding-left: 4px;
}
.tab.current {
    width: 85px;
    justify-content: space-between;
    padding: 0 2px 0 4px;
    background: #555;
}
.tab-list {
    margin-left: auto;
    padding-right: 5px;
}
.sheet {
    display: flex;
    flex: 1;
    min-height: 0;
    background: #fff;
}
.plan {
    flex: 1;
    min-width: 0;
    height: 100%;
    fill: none;
}
.scroll-y {
    flex: none;
    width: 9px;
    background: #eee;
}
.scroll-y span {
    display: block;
    width: 1px;
    margin: 60px 0 0 4px;
    height: 110px;
    background: #777;
}
.navbar,
.statusbar {
    display: flex;
    align-items: center;
    flex: none;
    height: 20px;
    background: #282828;
}
.navbar button,
.statusbar button {
    width: 19px;
    height: 20px;
}
.navbar .slim,
.statusbar .slim {
    width: 13px;
}
.divider {
    width: 1px;
    height: 10px;
    margin: 0 2px;
    background: #666;
}
.nav-end {
    display: flex;
    align-items: center;
    margin-left: auto;
    padding-right: 6px;
}
.navbar .dim-first {
    margin-left: 28px;
}
.nav-end .scale {
    margin: 0 13px 0 12px;
}

/* Plan drawing */
.line { stroke: #222; stroke-width: 1; }
.thin { stroke: #333; stroke-width: 0.6; }
.faint { stroke: #888; stroke-width: 0.5; }
.outer { stroke: #111; stroke-width: 2; }
.wall { stroke: #222; stroke-width: 1.6; stroke-dasharray: 1.6 0.3; }
.wall.thick { stroke: #444; stroke-width: 4; }
.wall.heavy { stroke: #000; stroke-width: 2; }
.axis { stroke: #444; stroke-width: 0.7; stroke-dasharray: 12 3 4 3; }
.dotted { stroke: #444; stroke-width: 0.7; stroke-dasharray: 1.5 1; }
.stair { stroke: #111; stroke-width: 2; stroke-dasharray: 4 1; }
.node { fill: #222; }
.plan .tag { fill: #fff; stroke: #333; stroke-width: 0.6; }
.plan text { fill: #222; stroke: none; font-family: "Liberation Sans", sans-serif; }
.tiny text { font-size: 4px; text-anchor: middle; }
.room text { font-size: 4px; font-weight: 700; text-anchor: middle; text-decoration: underline; }
.plan .mark { font-size: 4px; }
.plan .note text { fill: #111; font-size: 5px; }
.plan .small-note text { font-size: 4px; }
.plan .red text { fill: #e8262d; }
.puff-edge { fill: #86f5a8; stroke: #12863e; stroke-width: 5; stroke-linecap: round; stroke-dasharray: 0 4; }
.puff { fill: #86f5a8; stroke: #86f5a8; stroke-width: 4; stroke-linecap: round; stroke-dasharray: 0 4; }
.note-green { fill: #2ff088; }
.note-yellow { fill: #f7f25a; }
.green-line { stroke: #12a050; stroke-width: 0.8; }
.orange-line { stroke: #f08a3c; stroke-width: 0.8; }
.red-box { fill: #fff; stroke: #e8262d; stroke-width: 0.7; }
.red-line { stroke: #e8262d; stroke-width: 0.6; }
.red-cloud { stroke: #e8262d; stroke-width: 1; stroke-dasharray: 2 1; }
.yellow-cloud { fill: #e3e04d; stroke: #f08a3c; stroke-width: 2; stroke-dasharray: 2 1; }
.cyan-cloud { fill: #6fe9f5; stroke: #1ab8cc; stroke-width: 2; stroke-dasharray: 2 1; }

/* Markups list */
.markups {
    display: flex;
    flex: none;
    padding-bottom: 1px;
    overflow: hidden;
    background: #282828;
    border-bottom: 1px solid #000;
}
.markups .rail {
    width: 19px;
    height: 78px;
}
.panel {
    flex: 1;
    min-width: 0;
}
.panel-bar {
    display: flex;
    align-items: center;
    height: 20px;
    padding: 0 3px 0 6px;
}
.title {
    font-size: 8px;
    font-weight: 700;
}
.hide {
    margin: 0 4px 0 3px;
}
.search {
    display: flex;
    align-items: center;
    flex: 0 1 175px;
    height: 15px;
    padding: 0 1px;
    border: 1px solid #777;
}
.search input {
    flex: 1;
    min-width: 0;
    padding: 0 3px;
    border: none;
    outline: none;
    background: none;
    color: #dcdcdc;
    font: inherit;
}
.search input::placeholder {
    color: #dcdcdc;
    opacity: 1;
}
.filter {
    margin-left: 13px;
}
.export {
    margin-left: 18px;
}
.collapse {
    margin-left: auto;
}
.table-area {
    display: flex;
    height: 115px;
}
.table-clip {
    flex: 1;
    min-width: 0;
    overflow: hidden;
}
table {
    width: 100%;
    table-layout: fixed;
    border-collapse: collapse;
}
.c-subject { width: 106px; }
.c-label { width: 42px; }
.c-page { width: 53px; }
.c-comments { width: 121px; }
.c-author { width: 47px; }
.c-date { width: 28px; }
th {
    height: 19px;
    padding: 0 0 0 5px;
    border-right: 1px solid #777;
    background: #3a3a3a;
    font-size: 7px;
    font-weight: 700;
    text-align: left;
}
th.sorted {
    padding: 0;
    border-bottom: 1px solid #1a7fc4;
}
.subject-head {
    display: flex;
    align-items: center;
    gap: 4px;
}
.subject-head .up {
    margin-left: auto;
    margin-right: 2px;
}
td {
    height: 18px;
    padding: 1px 0 1px 1px;
    border-right: 1px solid #777;
    overflow: hidden;
    vertical-align: top;
    white-space: nowrap;
}
th:last-child,
td:last-child {
    border-right: none;
}
.group td {
    height: 11px;
}
.group-name {
    display: flex;
    align-items: center;
    gap: 3px;
    height: 9px;
    padding-left: 2px;
    font-weight: 700;
}
.subject {
    display: flex;
    align-items: center;
    gap: 1px;
    height: 9px;
    padding-left: 22px;
}
.table-area .scroll-y {
    width: 8px;
}
.table-area .scroll-y span {
    height: 17px;
    margin-top: 9px;
}
.scroll-x {
    height: 10px;
    padding: 5px 0 0 9px;
    background: #f0f0f0;
}
.scroll-x span {
    display: block;
    width: 264px;
    height: 1px;
    background: #777;
}
.statusbar {
    height: 18px;
}
.ready {
    width: 175px;
}
.statusbar button {
    height: 18px;
}
.statusbar .scale {
    margin-left: 13px;
}
.statusbar .size {
    margin-left: 14px;
}
.statusbar .coords {
    margin-left: 34px;
}
.resize {
    align-self: flex-end;
    width: 6px;
    height: 6px;
    margin: 0 1px 1px auto;
    background: repeating-linear-gradient(135deg, #888 0 1px, transparent 1px 3px);
    clip-path: polygon(100% 0, 100% 100%, 0 100%);
}

/* Chat window */
.chat {
    display: flex;
    flex-direction: column;
    min-width: 0;
    border-left: 2px solid #10161f;
    border-top: 1px solid #22323a;
    background: #21211f;
}
.chat-title {
    display: grid;
    grid-template-columns: 18px 12px 1fr auto;
    align-items: center;
    height: 18px;
    color: #b8b6ae;
}
.burst {
    width: 18px;
    height: 18px;
    stroke: #e8744f;
    stroke-width: 2;
}
.tiny-burst {
    width: 8px;
    height: 8px;
    margin-left: 2px;
    stroke-width: 3;
}
.caption {
    margin-left: 38px;
    color: #8d8b84;
    font-family: "Noto Sans", sans-serif;
    font-size: 7px;
    font-weight: 500;
    text-align: center;
}
.chat-buttons {
    display: flex;
    gap: 13px;
    padding-right: 6px;
    color: #d8d8d4;
}
.chat-bar {
    display: flex;
    align-items: center;
    justify-content: space-between;
    height: 30px;
    padding: 0 8px 0 6px;
    color: #9b9992;
}
.chat-main {
    display: flex;
    flex-direction: column;
    align-items: center;
    padding: 83px 20px 20px;
}
.plan-pill {
    margin: 0;
    padding: 5px;
    border-radius: 4px;
    background: #121211;
    color: #a5a39b;
    font-size: 8px;
    line-height: 8px;
}
.plan-pill span {
    margin: 0 1px;
    color: #66645f;
}
.plan-pill a {
    color: inherit;
}
h1 {
    display: flex;
    align-items: center;
    gap: 6px;
    margin: 18px 0 20px;
    color: #c3c0b2;
    font-family: "Liberation Serif", serif;
    font-size: 22px;
    font-weight: 400;
    line-height: 29px;
}
.composer {
    width: 100%;
    max-width: 360px;
    padding: 7px 7px 8px;
    border: 1px solid #3a3a37;
    border-radius: 10px;
    background: #2c2c2a;
}
.prompt {
    position: relative;
}
.prompt textarea {
    display: block;
    width: 100%;
    padding: 0;
    border: none;
    outline: none;
    overflow: hidden;
    resize: none;
    background: none;
    color: #f0efe9;
    font-family: Roboto, sans-serif;
    font-size: 9px;
    line-height: 13px;
}
.squiggle {
    position: absolute;
    top: 115px;
    left: 271px;
    width: 34px;
    height: 3px;
    fill: none;
    stroke: #d02c2c;
    stroke-width: 1;
}
.composer-bar {
    display: flex;
    align-items: center;
    gap: 4px;
    margin-top: 4px;
}
.ghost-button,
.send {
    width: 18px;
    height: 18px;
    border: 1px solid #42423f;
    border-radius: 5px;
    color: #a5a39b;
}
.model {
    display: flex;
    align-items: center;
    gap: 2px;
    margin: 0 8px 0 auto;
    color: #b5b2a5;
}
.model select {
    appearance: none;
    padding: 0;
    border: none;
    background: none;
    color: inherit;
    font-family: "Liberation Serif", serif;
    font-size: 9px;
    font-weight: 400;
    line-height: 10px;
}
.send {
    border: none;
    background: #e0613b;
    color: #fff;
}
```
